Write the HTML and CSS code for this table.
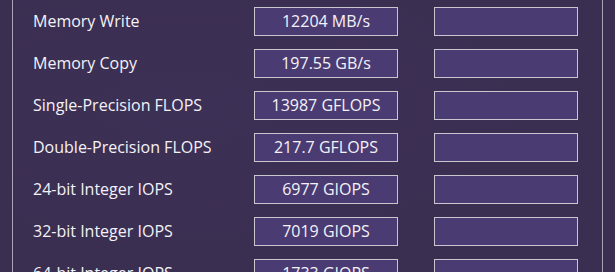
FILE: index.html
```html
<!DOCTYPE html>
<html>
<head>
<meta charset="utf-8">
<link rel="stylesheet" href="styles.css">
</head>
<body>
<div class="frame">
  <div class="row"><div class="label">Memory Write</div><div class="box">12204 MB/s</div><div class="box"></div></div>
  <div class="row"><div class="label">Memory Copy</div><div class="box">197.55 GB/s</div><div class="box"></div></div>
  <div class="row"><div class="label">Single-Precision FLOPS</div><div class="box">13987 GFLOPS</div><div class="box"></div></div>
  <div class="row"><div class="label">Double-Precision FLOPS</div><div class="box">217.7 GFLOPS</div><div class="box"></div></div>
  <div class="row"><div class="label">24-bit Integer IOPS</div><div class="box">6977 GIOPS</div><div class="box"></div></div>
  <div class="row"><div class="label">32-bit Integer IOPS</div><div class="box">7019 GIOPS</div><div class="box"></div></div>
  <div class="row"><div class="label">64-bit Integer IOPS</div><div class="box">1733 GIOPS</div><div class="box"></div></div>
</div>
</body>
</html>
```
FILE: styles.css
```css
html, body {
  margin: 0;
  padding: 0;
  height: 272px;
  overflow: hidden;
  background: #3a2e51;
}
body {
  font-family: "Open Sans", "Noto Sans", sans-serif;
  color: #f4f2f8;
}
.frame {
  margin-left: 12px;
  width: 591px;
  height: 272px;
  overflow: hidden;
  border-left: 1px solid #a9a4b6;
  border-right: 1px solid #a9a4b6;
  padding-top: 7px;
  box-sizing: border-box;
  background:
    radial-gradient(ellipse at 30% 40%, rgba(70,55,100,0.25), transparent 60%),
    #3a2e51;
}
.row {
  display: grid;
  grid-template-columns: 185px 144px 144px;
  column-gap: 36px;
  height: 29px;
  margin-bottom: 13px;
  padding-left: 20px;
  align-items: center;
}
.label {
  font-size: 16px;
  line-height: 29px;
  white-space: nowrap;
}
.box {
  height: 29px;
  box-sizing: border-box;
  border: 1px solid #c9c6cf;
  background: #4a3b72;
  font-size: 16px;
  line-height: 27px;
  text-align: center;
  white-space: nowrap;
}
```
